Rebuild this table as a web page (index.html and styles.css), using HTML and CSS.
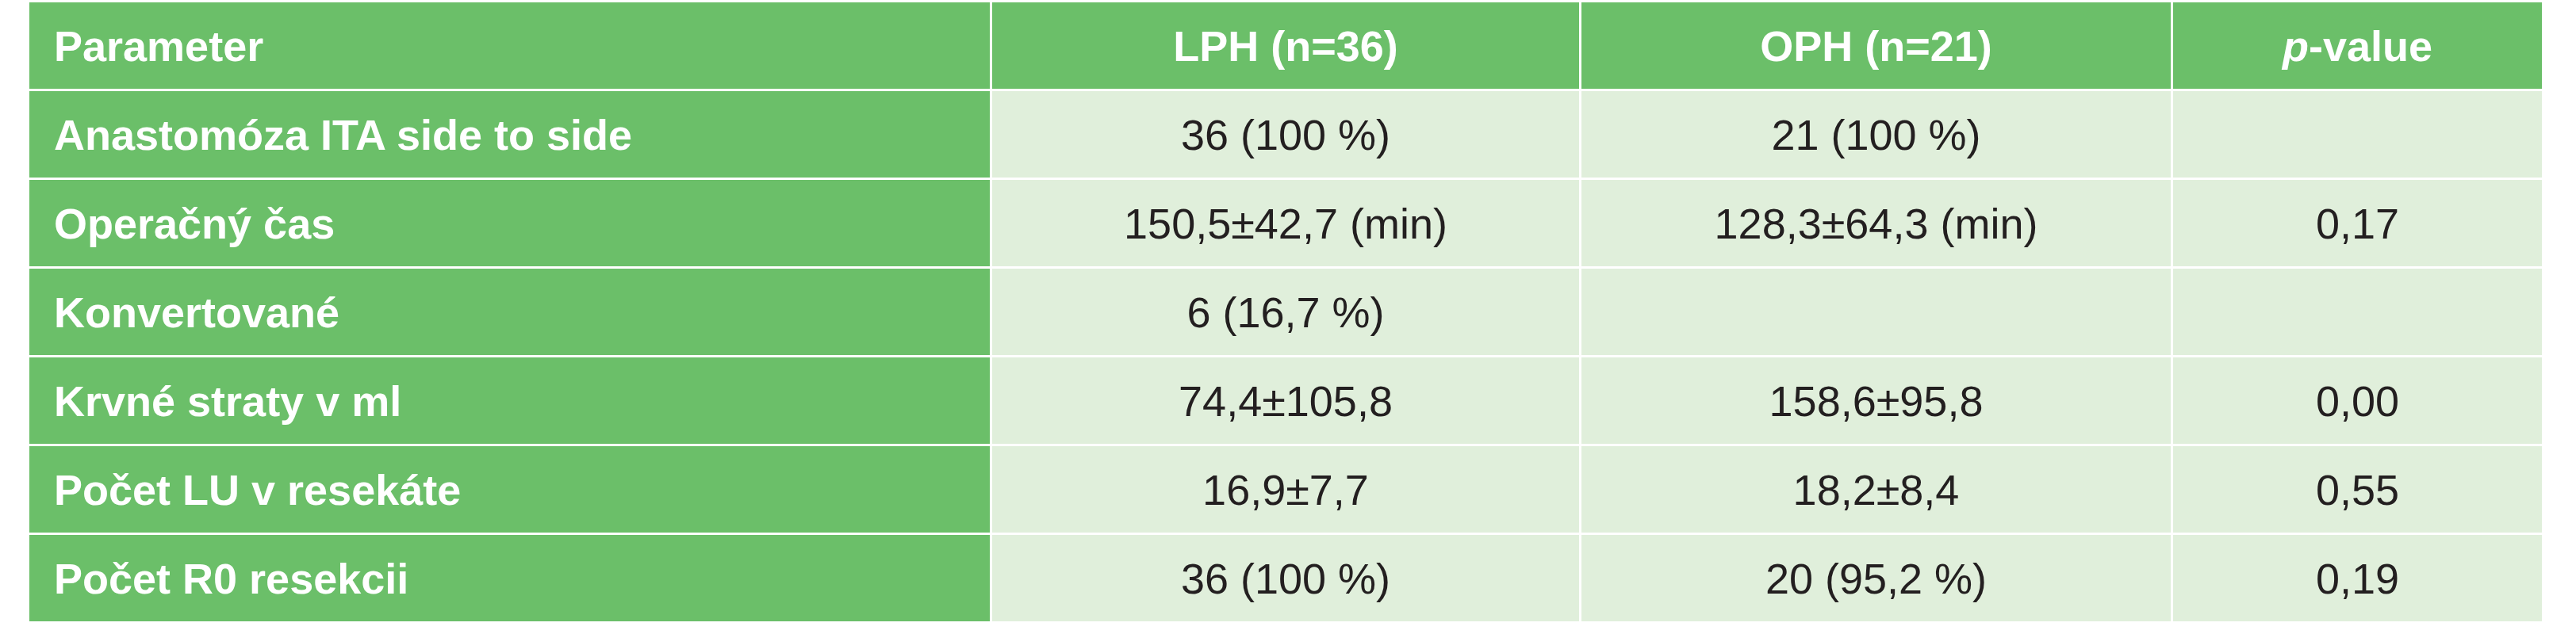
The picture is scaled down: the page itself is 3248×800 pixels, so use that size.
FILE: index.html
```html
<!DOCTYPE html>
<html lang="sk">
<head>
<meta charset="utf-8">
<title>Tabuľka</title>
<link rel="stylesheet" href="styles.css">
</head>
<body>
<table class="results">
  <colgroup>
    <col class="c-param">
    <col class="c-lph">
    <col class="c-oph">
    <col class="c-p">
  </colgroup>
  <thead>
    <tr>
      <th class="label">Parameter</th>
      <th>LPH (n=36)</th>
      <th>OPH (n=21)</th>
      <th><i>p</i>-value</th>
    </tr>
  </thead>
  <tbody>
    <tr>
      <th class="label">Anastomóza ITA side to side</th>
      <td>36 (100 %)</td>
      <td>21 (100 %)</td>
      <td></td>
    </tr>
    <tr>
      <th class="label">Operačný čas</th>
      <td>150,5±42,7 (min)</td>
      <td>128,3±64,3 (min)</td>
      <td>0,17</td>
    </tr>
    <tr>
      <th class="label">Konvertované</th>
      <td>6 (16,7 %)</td>
      <td></td>
      <td></td>
    </tr>
    <tr>
      <th class="label">Krvné straty v ml</th>
      <td>74,4±105,8</td>
      <td>158,6±95,8</td>
      <td>0,00</td>
    </tr>
    <tr>
      <th class="label">Počet LU v resekáte</th>
      <td>16,9±7,7</td>
      <td>18,2±8,4</td>
      <td>0,55</td>
    </tr>
    <tr>
      <th class="label">Počet R0 resekcii</th>
      <td>36 (100 %)</td>
      <td>20 (95,2 %)</td>
      <td>0,19</td>
    </tr>
  </tbody>
</table>
</body>
</html>
```
FILE: styles.css
```css
html, body {
  margin: 0;
  padding: 0;
  background: #ffffff;
}

.results {
  margin-left: 34px;
  border-collapse: separate;
  border-spacing: 3px;
  table-layout: fixed;
  width: 3174px;
  font-family: "Liberation Sans", Arial, sans-serif;
  font-size: 54px;
}

.c-param { width: 1211px; }
.c-lph { width: 740px; }
.c-oph { width: 743px; }
.c-p { width: 465px; }

.results th,
.results td {
  height: 109px;
  padding: 0;
  text-align: center;
  vertical-align: middle;
  white-space: nowrap;
}

.results th {
  background: #6bbf69;
  color: #ffffff;
  font-weight: bold;
}

.results td {
  background: #e0efdb;
  color: #231f20;
  font-weight: normal;
}

.results .label {
  text-align: left;
  padding-left: 31px;
}
```
